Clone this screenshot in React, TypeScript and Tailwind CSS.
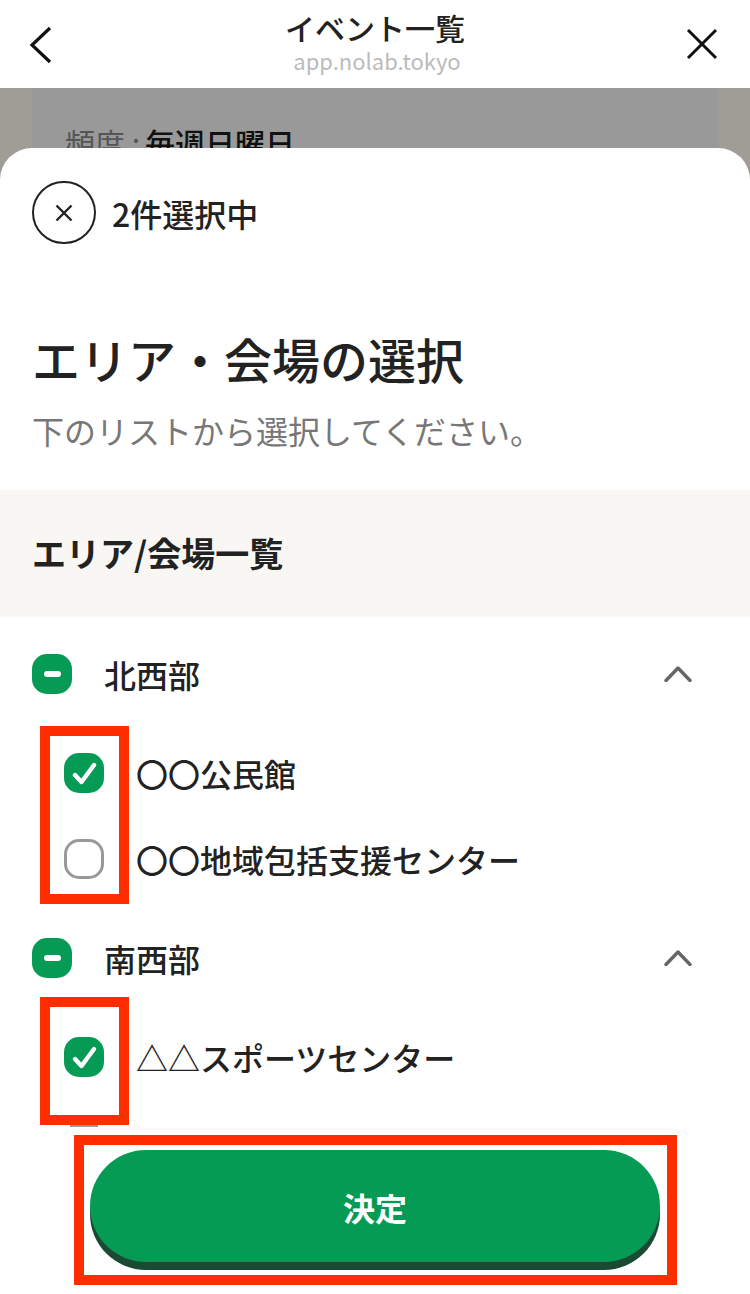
const font = { fontFamily: "'Noto Sans CJK JP', 'Noto Sans', sans-serif" };

function Parent({ label, className }: { label: string; className: string }) {
  return (
    <div className={`flex items-center h-10 pl-8 pr-[58px] ${className}`}>
      <span className="w-10 h-10 rounded-[15px] bg-[#069b54] flex items-center justify-center shrink-0">
        <span className="w-[17px] h-[6px] rounded-full bg-white" />
      </span>
      <span className="ml-[32px] text-[32px] leading-10 font-medium text-[#222]">{label}</span>
      <svg className="ml-auto" width="28" height="16" viewBox="0 0 28 16" fill="none">
        <path d="M2 14.5 14 2l12 12.5" stroke="#666" strokeWidth="3.4" strokeLinecap="round" strokeLinejoin="round" />
      </svg>
    </div>
  );
}

function Item({ label, checked, className }: { label: string; checked: boolean; className: string }) {
  return (
    <div className={`flex items-center h-10 pl-16 ${className}`}>
      {checked ? (
        <span className="w-10 h-10 rounded-[15px] bg-[#069b54] flex items-center justify-center shrink-0">
          <svg width="28" height="26" viewBox="0 0 28 26" fill="none">
            <path d="M5 15l6.5 7L24 5" stroke="#fff" strokeWidth="4.4" strokeLinecap="round" strokeLinejoin="round" />
          </svg>
        </span>
      ) : (
        <span className="w-10 h-10 rounded-[15px] border-[3px] border-[#999] bg-white shrink-0" />
      )}
      <span className="ml-[32px] text-[32px] leading-10 font-medium text-[#222] whitespace-nowrap">{label}</span>
    </div>
  );
}

export default function App() {
  return (
    <div className="relative w-[750px] h-[1294px] overflow-hidden bg-white flex flex-col" style={font}>
      {/* browser bar */}
      <div className="h-[88px] shrink-0 grid grid-cols-[1fr_auto_1fr] items-start">
        <svg className="ml-[29px] mt-[26px]" width="24" height="38" viewBox="0 0 24 38" fill="none">
          <path d="M21 2 3 19l18 17" stroke="#111" strokeWidth="3.2" />
        </svg>
        <div className="flex flex-col items-center pt-[8px]">
          <div className="text-[30px] leading-[38px] font-medium text-[#222]">イベント一覧</div>
          <div className="pl-[4px] pt-[2px] text-[22px] leading-[24px] text-[#bbb]">app.nolab.tokyo</div>
        </div>
        <svg className="ml-auto mr-[31px] mt-[27px]" width="34" height="34" viewBox="0 0 34 34" fill="none">
          <path d="M3 3l28 28M31 3 3 31" stroke="#111" strokeWidth="3" />
        </svg>
      </div>

      {/* dimmed page behind the sheet */}
      <div className="h-[92px] shrink-0 bg-[#a09d97] px-8 overflow-hidden">
        <div className="h-full bg-[#999] pl-[33px] pt-[33px] text-[30px] leading-[42px] whitespace-nowrap">
          <span className="text-[#555]">頻度 :</span>
          <span className="ml-[5px] font-medium text-[#111]">毎週日曜日</span>
        </div>
      </div>

      {/* sheet */}
      <div className="relative flex-1 -mt-8 bg-white rounded-t-[32px] flex flex-col">
        <div className="flex items-center pl-8 pt-[33px]">
          <span className="w-[64px] h-[63px] rounded-full border-2 border-[#222] flex items-center justify-center">
            <svg width="20" height="20" viewBox="0 0 20 20" fill="none">
              <path d="M2.5 2.5l15 15M17.5 2.5l-15 15" stroke="#222" strokeWidth="2.4" />
            </svg>
          </span>
          <span className="ml-4 text-[32px] leading-10 font-medium text-[#222]">2件選択中</span>
        </div>

        <h1 className="ml-8 mt-[79px] text-[48px] leading-[70px] font-medium text-[#222]">エリア・会場の選択</h1>
        <p className="ml-8 mt-[14px] text-[32px] leading-[46px] text-[#777] whitespace-nowrap">下のリストから選択してください。</p>

        <div className="mt-[37px] h-[127px] bg-[#f8f7f3] flex items-center pl-8">
          <span className="text-[34px] leading-10 font-bold text-[#222] pb-[2px]">エリア/会場一覧</span>
        </div>

        <Parent label="北西部" className="mt-[37px]" />
        <Item label="〇〇公民館" checked className="mt-[59px]" />
        <Item label="〇〇地域包括支援センター" checked={false} className="mt-[46px]" />
        <Parent label="南西部" className="mt-[59px]" />
        <Item label="△△スポーツセンター" checked className="mt-[59px]" />

        <div className="mt-[73px] px-[90px]">
          <button className="w-full h-[112px] pt-[2px] rounded-full bg-[#069b54] shadow-[0_8px_0_#1a4a34] text-white text-[32px] font-bold">
            決定
          </button>
        </div>
      </div>

      {/* red annotation frames */}
      <div className="absolute left-[70px] top-[1124px] w-[28px] h-[3px] bg-[#999]" />
      <div className="absolute left-[40px] top-[726px] w-[89px] h-[178px] border-[10px] border-[#ff2d00]" />
      <div className="absolute left-[40px] top-[997px] w-[89px] h-[128px] border-[10px] border-[#ff2d00]" />
      <div className="absolute left-[74px] top-[1135px] w-[603px] h-[150px] border-[10px] border-[#ff2d00]" />
    </div>
  );
}
